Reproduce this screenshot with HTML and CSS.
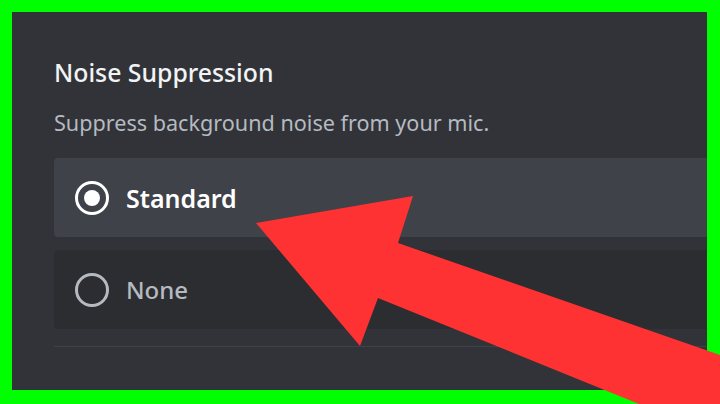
FILE: index.html
```html
<!DOCTYPE html>
<html lang="en">
<head>
    <meta charset="UTF-8">
    <meta name="viewport" content="width=device-width, initial-scale=1.0">
    <title>Voice Settings</title>
    <link rel="stylesheet" href="styles.css">
</head>
<body>
    <div class="frame">
        <section class="settings-panel">
            <h2 class="section-title">Noise Suppression</h2>
            <p class="section-desc">Suppress background noise from your mic.</p>

            <ul class="radio-group">
                <li class="radio-item selected">
                    <span class="radio"></span>
                    <span class="radio-label">Standard</span>
                </li>
                <li class="radio-item">
                    <span class="radio"></span>
                    <span class="radio-label">None</span>
                </li>
            </ul>

            <div class="divider"></div>
        </section>

        <!-- big pointer arrow on top of everything -->
        <svg class="pointer" width="720" height="404" viewBox="0 0 720 404">
            <polygon points="256,223 413,196 398,243 760,369 740,445 378,298 360,346" fill="#fe3232"/>
        </svg>
    </div>
</body>
</html>
```

FILE: styles.css
```css
body {
    margin: 0;
    padding: 0;
    background: #00ff00;
    font-family: 'Noto Sans', 'Open Sans', sans-serif;
    overflow: hidden;
}

.frame {
    position: relative;
    width: 720px;
    height: 404px;
    padding: 12px 13px 14px 12px;
    box-sizing: border-box;
}

.settings-panel {
    height: 100%;
    background-color: #313338;
    padding: 46px 0 0 42px;
    box-sizing: border-box;
    overflow: hidden;
}

.section-title {
    margin: 0;
    font-size: 24.8px;
    font-weight: 500;
    line-height: 28px;
    color: #f2f3f5;
}

.section-desc {
    margin: 24px 0 0;
    font-size: 21.6px;
    line-height: 26px;
    color: #b5bac1;
}

.radio-group {
    list-style: none;
    margin: 22px 0 0;
    padding: 0;
    display: flex;
    flex-direction: column;
    gap: 13px;
}

.radio-item {
    display: flex;
    align-items: center;
    gap: 17px;
    height: 79px;
    padding-left: 21px;
    background-color: #2b2d31;
    border-radius: 4px 0 0 4px;
    color: #b5bac1;
}

.radio-item.selected {
    background-color: #404249;
    color: #ffffff;
}

.radio {
    width: 34px;
    height: 34px;
    border: 3px solid currentColor;
    border-radius: 50%;
    box-sizing: border-box;
    display: flex;
    align-items: center;
    justify-content: center;
}

.radio-item.selected .radio::after {
    content: '';
    width: 16px;
    height: 16px;
    border-radius: 50%;
    background-color: #ffffff;
}

.radio-label {
    font-size: 25px;
    font-weight: 600;
}

.radio-item:not(.selected) .radio-label {
    font-size: 24px;
    font-weight: 500;
}

.divider {
    margin-top: 17px;
    height: 1px;
    background-color: #3f4147;
}

.pointer {
    position: absolute;
    top: 0;
    left: 0;
}
```
